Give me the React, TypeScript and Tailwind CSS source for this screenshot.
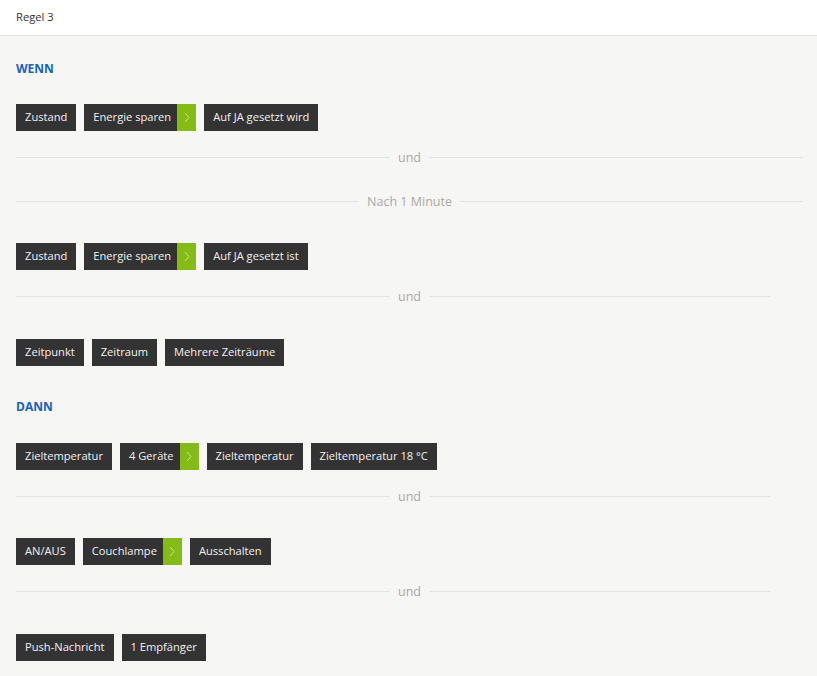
import React from "react";

const font = { fontFamily: '"Open Sans", "Noto Sans", sans-serif' };

function Chip({ label, arrow }: { label: string; arrow?: boolean }) {
  if (arrow) {
    return (
      <div className="flex h-[27px] items-stretch bg-[#333333] text-[11.15px] text-[#f2f2f2]">
        <span className="flex items-center pl-[9px] pr-[6px]">{label}</span>
        <span className="flex w-[19px] items-center justify-center bg-[#84bb17]">
          <svg width="6" height="11" viewBox="0 0 6 11">
            <polyline points="1,1 5,5.5 1,10" fill="none" stroke="#c9e397" strokeWidth="1" />
          </svg>
        </span>
      </div>
    );
  }
  return (
    <div className="flex h-[27px] items-center bg-[#333333] px-[9px] text-[11.15px] text-[#f2f2f2]">
      {label}
    </div>
  );
}

function Row({ items, className }: { items: { l: string; a?: boolean }[]; className: string }) {
  return (
    <div className={"flex gap-2 " + className}>
      {items.map((it, i) => (
        <Chip key={i} label={it.l} arrow={it.a} />
      ))}
    </div>
  );
}

function Divider({ label, short, className }: { label: string; short?: boolean; className: string }) {
  return (
    <div className={"flex h-[17px] items-center " + className}>
      <div className="h-px flex-1 bg-[#e3e3e1]" />
      <span className="px-2 text-[12.5px] leading-[17px] text-[#a9a9a9]">{label}</span>
      <div className="flex flex-1">
        <div className={"h-px flex-1 bg-[#e3e3e1] " + (short ? "mr-[32px]" : "")} />
      </div>
    </div>
  );
}

export default function App() {
  return (
    <div className="min-h-screen bg-[#f6f6f4]" style={font}>
      <div className="flex h-[36px] items-center border-b border-[#e2e2e2] bg-white pl-4 text-[11.15px] text-[#333333]">
        Regel 3
      </div>
      <div className="flex flex-col pl-4 pr-[14px] pb-4">
        <div className="mt-[25px] text-[12px] font-bold leading-[16px] text-[#1862b5]">WENN</div>
        <Row
          className="mt-[27px]"
          items={[{ l: "Zustand" }, { l: "Energie sparen", a: true }, { l: "Auf JA gesetzt wird" }]}
        />
        <Divider className="mt-[18px]" label="und" />
        <Divider className="mt-[27px]" label="Nach 1 Minute" />
        <Row
          className="mt-[33px]"
          items={[{ l: "Zustand" }, { l: "Energie sparen", a: true }, { l: "Auf JA gesetzt ist" }]}
        />
        <Divider className="mt-[18px]" label="und" short />
        <Row
          className="mt-[34px]"
          items={[{ l: "Zeitpunkt" }, { l: "Zeitraum" }, { l: "Mehrere Zeiträume" }]}
        />
        <div className="mt-[33px] text-[12px] font-bold leading-[16px] text-[#1862b5]">DANN</div>
        <Row
          className="mt-[28px]"
          items={[
            { l: "Zieltemperatur" },
            { l: "4 Geräte", a: true },
            { l: "Zieltemperatur" },
            { l: "Zieltemperatur 18 °C" },
          ]}
        />
        <Divider className="mt-[18px]" label="und" short />
        <Row
          className="mt-[33px]"
          items={[{ l: "AN/AUS" }, { l: "Couchlampe", a: true }, { l: "Ausschalten" }]}
        />
        <Divider className="mt-[18px]" label="und" short />
        <Row className="mt-[34px]" items={[{ l: "Push-Nachricht" }, { l: "1 Empfänger" }]} />
      </div>
    </div>
  );
}
